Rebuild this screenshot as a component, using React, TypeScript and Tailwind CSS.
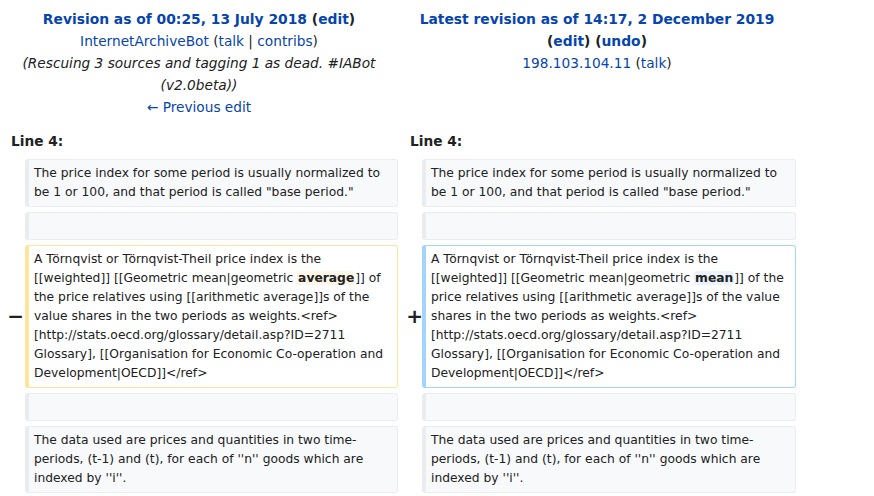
import React from "react"

const link = "text-[#0645ad]"

function Ctx({ children }: { children?: React.ReactNode }) {
  return (
    <div className="min-h-[28px] rounded-[3px] border border-l-4 border-[#eaecf0] bg-[#f8f9fa] py-[4px] pl-[5px] pr-[2px]">
      {children}
    </div>
  )
}

function Changed({ side, children }: { side: "del" | "add"; children: React.ReactNode }) {
  return (
    <div
      className={
        side === "del"
          ? "rounded-[3px] border border-l-4 border-[#ffe49c] bg-white py-[4px] pl-[5px] pr-[2px]"
          : "rounded-[3px] border border-l-4 border-[#a3d3ff] bg-white py-[4px] pl-[5px] pr-[2px]"
      }
    >
      {children}
    </div>
  )
}

export default function App() {
  const first = (
    <>
      The price index for some period is usually normalized to be 1 or 100, and that period is called "base
      period."
    </>
  )
  const last = (
    <>
      The data used are prices and quantities in two time-periods, (t-1) and (t), for each of ''n'' goods which are
      indexed by ''i''.
    </>
  )

  return (
    <div className="h-[496px] w-[874px] overflow-hidden bg-white font-['DejaVu_Sans',sans-serif] text-[#202122]">
      <div className="grid w-[796px] grid-cols-[25px_373px_24px_374px] gap-x-0 text-[12.3px] leading-[19px]">
        {/* header */}
        <div className="col-span-2 pt-[8px] text-center text-[13.7px] leading-[22px]">
          <div className="text-[13.85px] font-bold">
            <span className={link}>Revision as of 00:25, 13 July 2018</span> (<span className={link}>edit</span>)
          </div>
          <div>
            <span className={link}>InternetArchiveBot</span> (<span className={link}>talk</span> |{" "}
            <span className={link}>contribs</span>)
          </div>
          <div className="px-[20px] italic text-[#202122]">
            (Rescuing 3 sources and tagging 1 as dead. #IABot (v2.0beta))
          </div>
          <div className={link}>← Previous edit</div>
        </div>
        <div className="col-span-2 pt-[8px] text-center text-[13.7px] leading-[22px]">
          <div className="text-[13.85px] font-bold">
            <span className={link}>Latest revision as of 14:17, 2 December 2019</span>
          </div>
          <div className="text-[13.85px] font-bold">
            (<span className={link}>edit</span>) (<span className={link}>undo</span>)
          </div>
          <div>
            <span className={link}>198.103.104.11</span> (<span className={link}>talk</span>)
          </div>
        </div>

        {/* line numbers */}
        <div className="col-span-2 pl-[11px] pt-[12px] pb-[7px] text-[13.7px] font-bold leading-[22px]">Line 4:</div>
        <div className="col-span-2 pl-[12px] pt-[12px] pb-[7px] text-[13.7px] font-bold leading-[22px]">Line 4:</div>

        {/* rows */}
        <div />
        <div className="pb-[5px]">
          <Ctx>{first}</Ctx>
        </div>
        <div />
        <div className="pb-[5px]">
          <Ctx>{first}</Ctx>
        </div>

        <div />
        <div className="pb-[5px]">
          <Ctx />
        </div>
        <div />
        <div className="pb-[5px]">
          <Ctx />
        </div>

        <div className="flex items-center justify-end pr-[1px] pb-[5px] text-[20px] font-bold">−</div>
        <div className="pb-[5px]">
          <Changed side="del">
            A Törnqvist or Törnqvist-Theil price index is the [[weighted]] [[Geometric mean|geometric{" "}
            <span className="rounded-[3px] bg-[#fef6e7] px-[1px] font-bold">average</span>]] of the price relatives
            using [[arithmetic average]]s of the value shares in the two periods as weights.&lt;ref&gt;
            [http://stats.oecd.org/glossary/detail.asp?ID=2711 Glossary], [[Organisation for Economic Co-operation
            and Development|OECD]]&lt;/ref&gt;
          </Changed>
        </div>
        <div className="flex items-center justify-end pb-[5px] text-[20px] font-bold">
          <span className="-mr-[1px]">+</span>
        </div>
        <div className="pb-[5px]">
          <Changed side="add">
            A Törnqvist or Törnqvist-Theil price index is the [[weighted]] [[Geometric mean|geometric{" "}
            <span className="rounded-[3px] bg-[#eaf3ff] px-[1px] font-bold">mean</span>]] of the price relatives
            using [[arithmetic average]]s of the value shares in the two periods as weights.&lt;ref&gt;
            [http://stats.oecd.org/glossary/detail.asp?ID=2711 Glossary], [[Organisation for Economic Co-operation
            and Development|OECD]]&lt;/ref&gt;
          </Changed>
        </div>

        <div />
        <div className="pb-[5px]">
          <Ctx />
        </div>
        <div />
        <div className="pb-[5px]">
          <Ctx />
        </div>

        <div />
        <div className="pb-[5px]">
          <Ctx>{last}</Ctx>
        </div>
        <div />
        <div className="pb-[5px]">
          <Ctx>{last}</Ctx>
        </div>
      </div>
    </div>
  )
}
